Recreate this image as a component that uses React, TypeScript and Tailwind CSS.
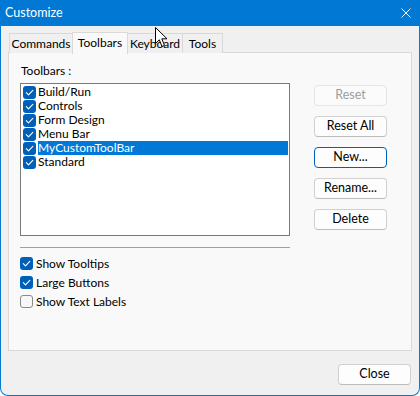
import React from "react";

const font = { fontFamily: 'Lato, "Noto Sans", sans-serif' };

function Check({ checked }: { checked: boolean }) {
  return (
    <svg width="13" height="13" viewBox="0 0 13 13" className="shrink-0">
      {checked ? (
        <>
          <rect x="0" y="0" width="13" height="13" rx="3" fill="#005fb8" />
          <path d="M3.3 6.7 L5.5 8.9 L9.8 4.4" fill="none" stroke="#ffffff" strokeWidth="1.1" strokeLinecap="round" strokeLinejoin="round" />
        </>
      ) : (
        <rect x="0.5" y="0.5" width="12" height="12" rx="2.5" fill="#f7f7f7" stroke="#8b8b8b" />
      )}
    </svg>
  );
}

function Btn({ label, disabled, focused }: { label: string; disabled?: boolean; focused?: boolean }) {
  const base = "w-[73px] h-[21px] rounded-[4px] flex items-center justify-center text-[12.5px] leading-none";
  let cls = "bg-[#fdfdfd] border border-[#d0d0d0] border-b-[#bcbcbc] text-black";
  if (disabled) cls = "bg-[#fbfbfb] border border-[#e5e5e5] text-[#9d9d9d]";
  if (focused) cls = "bg-[#fdfdfd] border border-[#005fb8] text-black";
  return <div className={`${base} ${cls}`}>{label}</div>;
}

const items = ["Build/Run", "Controls", "Form Design", "Menu Bar", "MyCustomToolBar", "Standard"];

export default function App() {
  return (
    <div className="relative w-[420px] h-[396px] bg-white" style={font}>
      <div className="w-[420px] h-[396px] flex flex-col bg-[#f0f0f0] border-x border-b border-[#0078d4] rounded-b-[8px] overflow-hidden">
        <div className="h-[26px] shrink-0 bg-[#0078d4] flex items-center justify-between pl-[5px] pr-[9px] text-white text-[12.5px] -mx-[1px]">
          <span>Customize</span>
          <svg width="10" height="10" viewBox="0 0 10 10">
            <path d="M0.5 0.5 L9.5 9.5 M9.5 0.5 L0.5 9.5" stroke="#ffffff" strokeWidth="1" />
          </svg>
        </div>
        <div className="flex flex-col px-[7px] pt-[6px]">
          <div className="relative z-10 h-[20px] flex items-start pl-[1px] text-[12px] text-black">
            <div className="mt-[1px] h-[20px] w-[63px] border border-[#d9d9d9] border-b-0 border-r-0 bg-[#f0f0f0] flex items-center justify-center">Commands</div>
            <div className="h-[22px] w-[56px] border border-[#d9d9d9] border-b-0 bg-[#f9f9f9] flex items-center justify-center pb-[1px]">Toolbars</div>
            <div className="mt-[1px] h-[20px] w-[55px] border border-[#d9d9d9] border-b-0 border-l-0 bg-[#f0f0f0] flex items-center justify-center">Keyboard</div>
            <div className="mt-[1px] h-[20px] w-[40px] border border-[#d9d9d9] border-b-0 border-l-0 bg-[#f0f0f0] flex items-center justify-center">Tools</div>
          </div>
          <div className="h-[299px] border border-[#d9d9d9] bg-[#f9f9f9] flex pl-[11px] pt-[10px] text-[12px] text-black">
            <div className="w-[270px] flex flex-col">
              <div className="h-[16px] leading-[16px] pl-[1px] mb-[4px]">Toolbars :</div>
              <div className="h-[153px] border border-[#7a7a7a] bg-white pt-[1px] pl-[2px] pr-[1px] flex flex-col">
                {items.map((it) => {
                  const sel = it === "MyCustomToolBar";
                  return (
                    <div key={it} className="h-[14px] flex items-center">
                      <Check checked />
                      <div className={`ml-[2px] flex-1 h-[14px] leading-[14px] ${sel ? "bg-[#0078d7] text-white" : ""}`}>{it}</div>
                    </div>
                  );
                })}
              </div>
              <div className="mt-[11px] h-[1px] bg-[#a0a0a0]" />
              <div className="mt-[6px] flex flex-col">
                {[
                  ["Show Tooltips", true],
                  ["Large Buttons", true],
                  ["Show Text Labels", false],
                ].map(([l, c]) => (
                  <div key={l as string} className="h-[19px] flex items-center">
                    <Check checked={c as boolean} />
                    <span className="ml-[3px] leading-[19px]">{l as string}</span>
                  </div>
                ))}
              </div>
            </div>
            <div className="ml-[24px] pt-[22px] flex flex-col gap-[10px]">
              <Btn label="Reset" disabled />
              <Btn label="Reset All" />
              <Btn label="New..." focused />
              <Btn label="Rename..." />
              <Btn label="Delete" />
            </div>
          </div>
          <div className="flex justify-end pt-[13px] pr-[1px]">
            <Btn label="Close" />
          </div>
        </div>
      </div>
      <svg className="absolute z-20 left-[155px] top-[27px]" width="13" height="21" viewBox="0 0 13 21">
        <path d="M0.5 0.5 L0.5 16.5 L4.3 12.8 L7 19.5 L9.5 18.4 L6.8 11.8 L12 11.8 Z" fill="#ffffff" stroke="#000000" strokeWidth="1" strokeLinejoin="round" />
      </svg>
    </div>
  );
}
